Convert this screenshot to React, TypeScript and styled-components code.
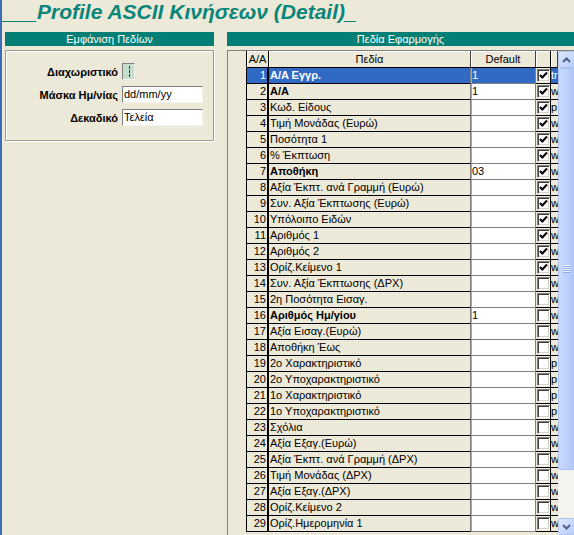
import React from 'react';
import styled, { createGlobalStyle } from 'styled-components';

const TEAL = '#0a857a';
const BEIGE = '#ece9d8';
const SELECT = '#316ac5';
const FONT = '"Liberation Sans", Arial, "DejaVu Sans", sans-serif';

const GlobalStyle = createGlobalStyle`
  html, body { margin: 0; padding: 0; }
  body {
    background: ${BEIGE};
    font-family: ${FONT};
    width: 574px;
    height: 535px;
    overflow: hidden;
  }
  * { box-sizing: border-box; }
`;

type FieldRow = {
  aa: number;
  name: string;
  bold?: boolean;
  def?: string;
  checked?: boolean;
  tag: string;
};

const ROWS: FieldRow[] = [
  { aa: 1, name: 'A/A Εγγρ.', bold: true, def: '1', checked: true, tag: 'tr' },
  { aa: 2, name: 'A/A', bold: true, def: '1', checked: true, tag: 'w' },
  { aa: 3, name: 'Κωδ. Είδους', checked: true, tag: 'p' },
  { aa: 4, name: 'Τιμή Μονάδας (Ευρώ)', checked: true, tag: 'w' },
  { aa: 5, name: 'Ποσότητα 1', checked: true, tag: 'w' },
  { aa: 6, name: '% Έκπτωση', checked: true, tag: 'w' },
  { aa: 7, name: 'Αποθήκη', bold: true, def: '03', checked: true, tag: 'w' },
  { aa: 8, name: 'Αξία Έκπτ. ανά Γραμμή (Ευρώ)', checked: true, tag: 'w' },
  { aa: 9, name: 'Συν. Αξία Έκπτωσης (Ευρώ)', checked: true, tag: 'w' },
  { aa: 10, name: 'Υπόλοιπο Ειδών', checked: true, tag: 'w' },
  { aa: 11, name: 'Αριθμός 1', checked: true, tag: 'w' },
  { aa: 12, name: 'Αριθμός 2', checked: true, tag: 'w' },
  { aa: 13, name: 'Ορίζ.Κείμενο 1', checked: true, tag: 'w' },
  { aa: 14, name: 'Συν. Αξία Έκπτωσης (ΔΡΧ)', tag: 'w' },
  { aa: 15, name: '2η Ποσότητα Εισαγ.', tag: 'w' },
  { aa: 16, name: 'Αριθμός Ημ/γίου', bold: true, def: '1', tag: 'w' },
  { aa: 17, name: 'Αξία Εισαγ.(Ευρώ)', tag: 'w' },
  { aa: 18, name: 'Αποθήκη Έως', tag: 'w' },
  { aa: 19, name: '2ο Χαρακτηριστικό', tag: 'p' },
  { aa: 20, name: '2ο Υποχαρακτηριστικό', tag: 'p' },
  { aa: 21, name: '1ο Χαρακτηριστικό', tag: 'p' },
  { aa: 22, name: '1ο Υποχαρακτηριστικό', tag: 'p' },
  { aa: 23, name: 'Σχόλια', tag: 'w' },
  { aa: 24, name: 'Αξία Εξαγ.(Ευρώ)', tag: 'w' },
  { aa: 25, name: 'Αξία Έκπτ. ανά Γραμμή (ΔΡΧ)', tag: 'w' },
  { aa: 26, name: 'Τιμή Μονάδας (ΔΡΧ)', tag: 'w' },
  { aa: 27, name: 'Αξία Εξαγ.(ΔΡΧ)', tag: 'w' },
  { aa: 28, name: 'Ορίζ.Κείμενο 2', tag: 'w' },
  { aa: 29, name: 'Ορίζ.Ημερομηνία 1', tag: 'w' },
];

const COLUMNS = '19px 22px 202px 65px 15px 7px';

const Page = styled.div`
  display: flex;
  flex-direction: column;
  width: 574px;
  height: 535px;
  border-left: 2px solid #3a6fb8;
  overflow: hidden;
`;

const Title = styled.div`
  height: 32px;
  font: italic bold 21px/24px ${FONT};
  color: ${TEAL};
  white-space: nowrap;
`;

const Columns = styled.div`
  display: flex;
  gap: 13px;
  padding-left: 3px;
  flex: 1;
  min-height: 0;
`;

const LeftPane = styled.div`
  width: 209px;
  flex: none;
  display: flex;
  flex-direction: column;
  gap: 4px;
`;

const RightPane = styled.div`
  flex: 1;
  min-width: 0;
  display: flex;
  flex-direction: column;
  gap: 4px;
`;

const SectionHeader = styled.div`
  height: 14px;
  background: #037f75;
  color: #fff;
  font-size: 11px;
  line-height: 14px;
  text-align: center;
  white-space: nowrap;
`;

const GroupBox = styled.div`
  height: 91px;
  border: 1px solid #9d9a8c;
  box-shadow: inset 1px 1px 0 #fff, 1px 1px 0 #fff;
  padding: 12px 0 0 0;
`;

const FieldGrid = styled.div`
  display: grid;
  grid-template-columns: 112px auto;
  column-gap: 4px;
  row-gap: 6px;
  align-items: center;
`;

const FieldLabel = styled.div`
  font-size: 11px;
  font-weight: bold;
  text-align: right;
  color: #000;
  white-space: nowrap;
`;

const TextInput = styled.div<{ $width: number; $tint?: string }>`
  width: ${(p) => p.$width}px;
  height: 17px;
  background: ${(p) => p.$tint || '#fff'};
  border-top: 1px solid #808080;
  border-left: 1px solid #808080;
  border-right: 1px solid #f4f3ee;
  border-bottom: 1px solid #f4f3ee;
  font-size: 11px;
  line-height: 15px;
  padding-left: 1px;
  color: #000;
  white-space: nowrap;
  overflow: hidden;
`;

const SepMark = styled.span`
  display: block;
  width: 1px;
  height: 11px;
  margin: 2px auto 0;
  border-left: 1px dashed #333;
`;

const GridBox = styled.div`
  flex: 1;
  min-height: 0;
  display: flex;
  border-top: 1px solid #808080;
  border-left: 1px solid #808080;
  overflow: hidden;
`;

const Table = styled.div`
  flex: none;
  width: 330px;
  display: flex;
  flex-direction: column;
`;

const HeaderRow = styled.div`
  display: grid;
  grid-template-columns: ${COLUMNS};
  height: 17px;
  flex: none;
`;

const HeaderCell = styled.div<{ $edge?: string }>`
  border-bottom: 1px solid #000;
  border-right: 1px solid ${(p) => p.$edge || '#404040'};
  box-shadow: inset 1px 1px 0 #fff;
  font-size: 11px;
  line-height: 16px;
  text-align: center;
  white-space: nowrap;
  overflow: hidden;
`;

const HeaderBlank = styled.div`
  border-bottom: 1px solid #ece9d8;
  border-right: 1px solid #000;
`;

const Row = styled.div`
  display: grid;
  grid-template-columns: ${COLUMNS};
  height: 16px;
  flex: none;
  font-size: 11px;
  line-height: 15px;
  white-space: nowrap;
`;

const IndicatorCell = styled.div<{ $sel?: boolean }>`
  border-right: 1px solid #000;
  background: ${(p) => (p.$sel ? SELECT : 'transparent')};
`;

const NumCell = styled.div<{ $sel?: boolean }>`
  border-right: 2px solid #000;
  border-bottom: 1px solid #000;
  background: ${(p) => (p.$sel ? SELECT : 'transparent')};
  color: ${(p) => (p.$sel ? '#fff' : '#000')};
  text-align: right;
  padding-right: 1px;
`;

const NameCell = styled.div<{ $sel?: boolean; $bold?: boolean }>`
  border-right: 1px solid #808080;
  border-bottom: 1px solid #000;
  background: ${(p) => (p.$sel ? SELECT : 'transparent')};
  color: ${(p) => (p.$sel ? '#fff' : '#000')};
  font-weight: ${(p) => (p.$bold ? 'bold' : 'normal')};
  padding-left: 1px;
  overflow: hidden;
`;

const DefaultCell = styled.div<{ $sel?: boolean }>`
  border-left: 1px solid #a8a6a0;
  border-right: 1px solid #808080;
  border-bottom: 1px solid #808080;
  background: ${(p) => (p.$sel ? SELECT : '#fff')};
  color: ${(p) => (p.$sel ? '#fff' : '#000')};
  overflow: hidden;
`;

const CheckCell = styled.div`
  border-right: 1px solid #000;
  border-bottom: 1px solid #000;
  display: flex;
  align-items: center;
  justify-content: center;
`;

const CheckBox = styled.div`
  width: 13px;
  height: 13px;
  background: #fff;
  border-top: 1px solid #808080;
  border-left: 1px solid #808080;
  border-right: 1px solid #fff;
  border-bottom: 1px solid #fff;
  box-shadow: inset 1px 1px 0 #404040, inset -1px -1px 0 #d4d0c8;
  display: flex;
  align-items: center;
  justify-content: center;
`;

const TagCell = styled.div<{ $sel?: boolean }>`
  border-bottom: 1px solid #000;
  background: ${(p) => (p.$sel ? SELECT : 'transparent')};
  color: ${(p) => (p.$sel ? '#fff' : '#000')};
  overflow: hidden;
`;

const ScrollBar = styled.div`
  width: 17px;
  flex: none;
  display: flex;
  flex-direction: column;
  background: #f4f3ee;
`;

const ScrollButton = styled.div`
  height: 17px;
  flex: none;
  border: 1px solid #b3c5ef;
  border-radius: 2px;
  background: linear-gradient(135deg, #e1eafe 0%, #c6d6fc 60%, #b7cbf8 100%);
  display: flex;
  align-items: center;
  justify-content: center;
`;

const ScrollThumb = styled.div<{ $height: number }>`
  height: ${(p) => p.$height}px;
  flex: none;
  border: 1px solid #a8bdf0;
  border-radius: 2px;
  background: linear-gradient(90deg, #cbdafd 0%, #bccffc 60%, #aec4f7 100%);
  display: flex;
  align-items: center;
  justify-content: center;
`;

const Grip = styled.div`
  width: 7px;
  height: 8px;
  background: repeating-linear-gradient(
    180deg,
    #eef4fe 0px,
    #eef4fe 1px,
    #8cabf0 1px,
    #8cabf0 2px
  );
`;

const ScrollTrack = styled.div`
  flex: 1;
`;

const Check = () => (
  <svg width="9" height="9" viewBox="0 0 9 9">
    <polyline points="1,4 3.3,6.5 8,1.5" fill="none" stroke="#000" strokeWidth="2" />
  </svg>
);

const UpArrow = () => (
  <svg width="9" height="6" viewBox="0 0 9 6">
    <polyline points="1,5 4.5,1.5 8,5" fill="none" stroke="#4d6185" strokeWidth="2" />
  </svg>
);

const DownArrow = () => (
  <svg width="9" height="6" viewBox="0 0 9 6">
    <polyline points="1,1 4.5,4.5 8,1" fill="none" stroke="#4d6185" strokeWidth="2" />
  </svg>
);

export default function App() {
  return (
    <>
      <GlobalStyle />
      <Page>
        <Title>___Profile ASCII Κινήσεων (Detail)_</Title>
        <Columns>
          <LeftPane>
            <SectionHeader>Εμφάνιση Πεδίων</SectionHeader>
            <GroupBox>
              <FieldGrid>
                <FieldLabel>Διαχωριστικό</FieldLabel>
                <TextInput $width={13} $tint="#c4dfcc">
                  <SepMark />
                </TextInput>
                <FieldLabel>Μάσκα Ημ/νίας</FieldLabel>
                <TextInput $width={81}>dd/mm/yy</TextInput>
                <FieldLabel>Δεκαδικό</FieldLabel>
                <TextInput $width={81}>Τελεία</TextInput>
              </FieldGrid>
            </GroupBox>
          </LeftPane>
          <RightPane>
            <SectionHeader>Πεδία Εφαρμογής</SectionHeader>
            <GridBox>
              <Table>
                <HeaderRow>
                  <HeaderBlank />
                  <HeaderCell $edge="#000">A/A</HeaderCell>
                  <HeaderCell>Πεδία</HeaderCell>
                  <HeaderCell>Default</HeaderCell>
                  <HeaderCell $edge="#000" />
                  <HeaderCell />
                </HeaderRow>
                {ROWS.map((r) => {
                  const sel = r.aa === 1;
                  return (
                    <Row key={r.aa}>
                      <IndicatorCell />
                      <NumCell $sel={sel}>{r.aa}</NumCell>
                      <NameCell $sel={sel} $bold={r.bold}>
                        {r.name}
                      </NameCell>
                      <DefaultCell $sel={sel}>{r.def}</DefaultCell>
                      <CheckCell>
                        <CheckBox>{r.checked && <Check />}</CheckBox>
                      </CheckCell>
                      <TagCell $sel={sel}>{r.tag}</TagCell>
                    </Row>
                  );
                })}
              </Table>
              <ScrollBar>
                <ScrollButton>
                  <UpArrow />
                </ScrollButton>
                <ScrollThumb $height={402}>
                  <Grip />
                </ScrollThumb>
                <ScrollTrack />
                <ScrollButton>
                  <DownArrow />
                </ScrollButton>
              </ScrollBar>
            </GridBox>
          </RightPane>
        </Columns>
      </Page>
    </>
  );
}
